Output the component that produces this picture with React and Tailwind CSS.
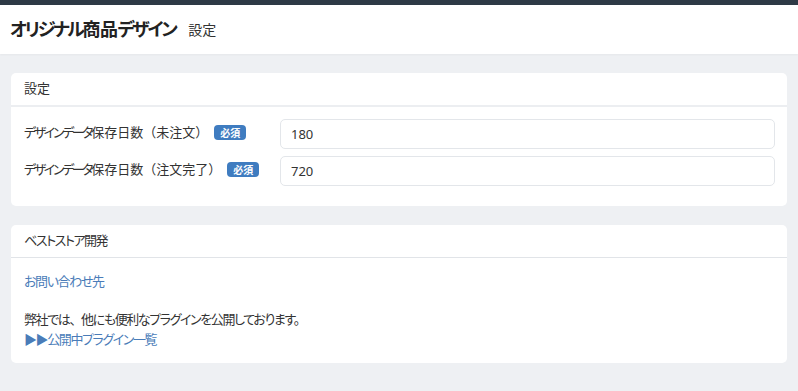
import React from 'react';

const Badge = () => (
  <span className="ml-[6px] inline-flex items-center justify-center h-[15px] w-[32px] rounded-[4px] bg-[#3f7cc0] text-white text-[10px] font-bold leading-none">
    必須
  </span>
);

const Field = ({ paren, value }) => (
  <div className="flex items-center">
    <div className="w-[256px] shrink-0 flex items-center text-[13px] text-[#333] pb-[3px]">
      <span className="tracking-[-2.4px]">デザインデータ</span>
      <span>保存日数</span>
      <span className="[font-feature-settings:normal]">（{paren}）</span>
      <Badge />
    </div>
    <input
      defaultValue={value}
      className="flex-1 h-[30px] rounded-[5px] border border-[#e3e6ea] bg-white px-[10px] text-[13px] text-[#333] outline-none"
    />
  </div>
);

export default function App() {
  return (
    <div className="min-h-screen bg-[#eef0f3] font-['Noto_Sans','Noto_Sans_CJK_JP',sans-serif] [font-feature-settings:'palt']">
      <div className="h-[5px] bg-[#2e3a46]" />

      {/* Page title */}
      <header className="h-[49px] bg-white flex items-center px-[10px] shadow-[0_1px_2px_rgba(0,0,0,0.04)]">
        <h1 className="text-[18px] font-bold text-[#222]">
          <span className="tracking-[-2.4px]">オリジナル</span>
          <span className="tracking-[-0.5px]">商品</span>
          <span className="tracking-[-2.4px]">デザイン</span>
        </h1>
        <span className="ml-[13px] text-[14px] text-[#333]">設定</span>
      </header>

      <main className="px-[11px] pt-[19px] pb-[20px] flex flex-col gap-[19px]">
        {/* Settings card */}
        <section className="bg-white rounded-[5px]">
          <div className="h-[34px] px-[13px] flex items-center text-[13px] text-[#333] border-b-2 border-[#eceef1]">
            設定
          </div>
          <div className="pl-[13px] pr-[12px] pt-[12px] pb-[20px] flex flex-col gap-[7px]">
            <Field paren="未注文" value="180" />
            <Field paren="注文完了" value="720" />
          </div>
        </section>

        {/* Vendor card */}
        <section className="bg-white rounded-[5px]">
          <div className="h-[33px] px-[13px] flex items-center text-[13px] text-[#333] tracking-[-1.5px] border-b border-[#e1e4e8]">
            ベストストア開発
          </div>
          <div className="px-[13px] pt-[13px] pb-[14px] text-[13px] leading-[20px] tracking-[-1.4px]">
            <a className="text-[#4a7cb8]">お問い合わせ先</a>
            <p className="mt-[18px] text-[#333]">
              弊社では<span className="[font-feature-settings:normal]">、</span>他にも便利なプラグインを公開しております。
            </p>
            <a className="text-[#4a7cb8]">▶▶公開中プラグイン一覧</a>
          </div>
        </section>
      </main>
    </div>
  );
}
